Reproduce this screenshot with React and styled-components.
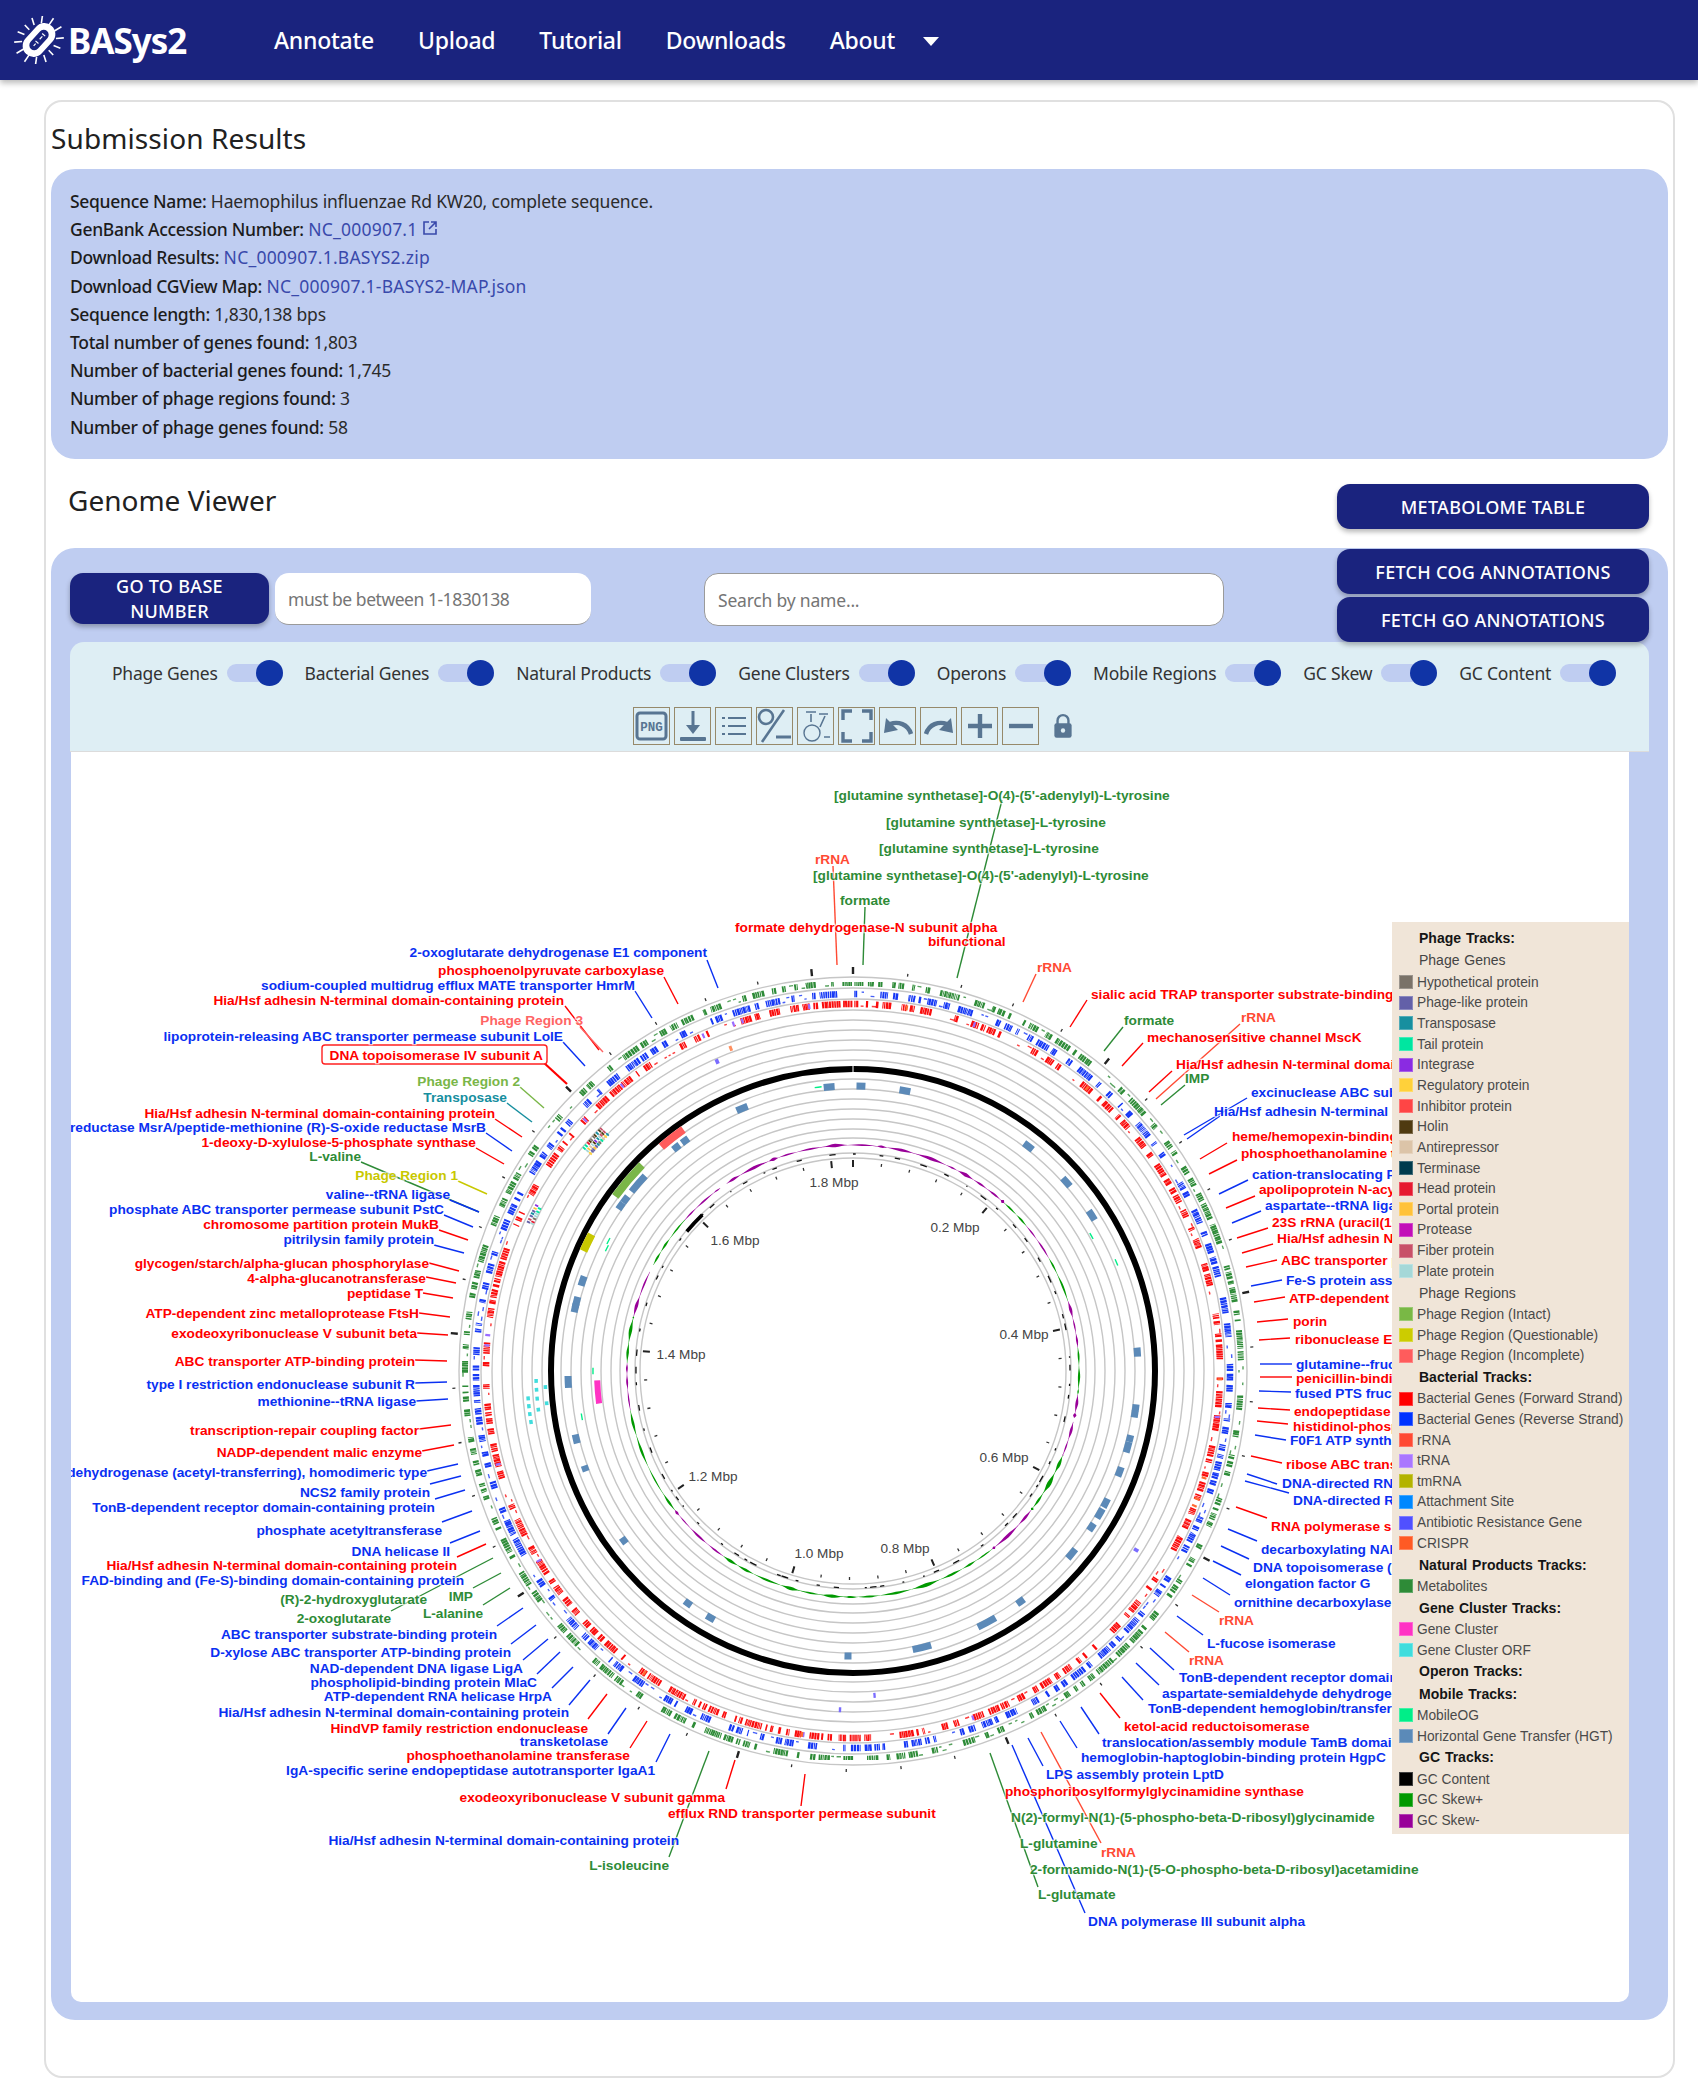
import React from 'react';
import styled, { createGlobalStyle } from 'styled-components';

const Global = createGlobalStyle`
  html, body { margin: 0; padding: 0; background: #fff; }
  body { font-family: "Noto Sans", "Liberation Sans", sans-serif; color: #212121; }
  * { box-sizing: border-box; }
`;

const NavBar = styled.header`
  height: 80px; background: #1a237e; display: flex; align-items: center;
  box-shadow: 0 3px 6px rgba(0,0,0,.28); position: relative;
`;
const LogoWrap = styled.div`
  width: 274px; display: flex; align-items: center; padding-left: 14px; flex: none;
`;
const LogoText = styled.span`
  color: #fff; font-size: 35px; font-weight: 700; margin-left: 4px; letter-spacing: -1px;
`;
const NavLink = styled.a`
  color: #fff; font-size: 23px; font-weight: 500; margin-right: ${p => p.$gap}px; white-space: nowrap; letter-spacing: -.25px;
`;
const Caret = styled.span`
  width: 0; height: 0; border-left: 8px solid transparent; border-right: 8px solid transparent;
  border-top: 9px solid #fff; margin-top: 2px;
`;
const Card = styled.main`
  margin: 20px 23px 0 44px; width: 1631px; height: 1978px; border: 2px solid #e0e0e0; border-radius: 18px;
  padding: 0 5px;
`;
const PageTitle = styled.h1`
  margin: 17px 0 12px; font-size: 28px; line-height: 38px; font-weight: 400; color: #212121; letter-spacing: .1px;
`;
const InfoPanel = styled.section`
  background: #bfcdf1; border-radius: 24px; padding: 18px 19px; height: 290px;
`;
const InfoLine = styled.div`
  font-size: 17.5px; letter-spacing: -.18px; line-height: 28.2px; color: #2b2b2b;
  white-space: nowrap;
`;
const InfoKey = styled.span`font-weight: 500; color: #1c1c1c; letter-spacing: -.3px;`;
const InfoLink = styled.a`color: #3949ab; letter-spacing: .22px;`;
const GenomeHead = styled.div`
  height: 89px; display: flex; justify-content: space-between; align-items: flex-start; padding: 25px 19px 0 17px;
`;
const GenomeTitle = styled.h2`
  margin: -1px 0 0; font-size: 28px; line-height: 34px; font-weight: 400; color: #212121;
`;
const NavyButton = styled.button`
  background: #1a237e; color: #fff; border: none; border-radius: 13px; font-family: inherit;
  font-size: 18px; font-weight: 500; letter-spacing: .3px; width: ${p => p.$w}px; height: ${p => p.$h}px;
  line-height: 25px; padding: 1px 10px 0; box-shadow: 0 3px 5px rgba(0,0,0,.28); text-transform: uppercase;
  margin-top: ${p => p.$mt || 0}px;
`;
const ViewerPanel = styled.section`
  background: #bfcdf1; border-radius: 24px; height: 1472px; padding: 1px 19px 0;
`;
const ControlsRow = styled.div`
  display: flex; align-items: flex-start; height: 93px;
`;
const PlainInput = styled.div`
  background: #fff; border-radius: 14px; height: ${p => p.$h}px; width: ${p => p.$w}px; margin: 24px 0 0 ${p => p.$ml}px;
  padding-left: 13px; display: flex; align-items: center; font-size: 17.5px; color: #757575;
  letter-spacing: ${p => p.$track}px;
  border: ${p => p.$outlined ? '1px solid #9a9a9a' : 'none'};
  border-bottom: 1px solid #9a9a9a;
`;
const FetchColumn = styled.div`
  margin-left: auto; display: flex; flex-direction: column; gap: 3px;
`;
const ControlPanel = styled.div`
  height: 110px; background: #deeef4; border-radius: 14px 14px 0 0; border-bottom: 1px solid #dcdcdc;
  display: flex; flex-direction: column;
`;
const ToggleRow = styled.div`
  display: flex; align-items: center; gap: 22px; padding: 0 0 0 42px; height: 62px; flex: none;
`;
const ToggleItem = styled.div`display: flex; align-items: center; gap: 9px;`;
const ToggleText = styled.span`font-size: 17.5px; letter-spacing: -.23px; color: #333; white-space: nowrap; line-height: 26px;`;
const ToggleTrack = styled.span`
  display: block; position: relative; width: 56px; height: 18px; border-radius: 9px; background: #bfcdf1;
`;
const ToggleThumb = styled.span`
  position: absolute; right: 0; top: -4px; width: 27px; height: 26px; border-radius: 50%; background: #1034a6;
`;
const Toolbar = styled.div`
  display: flex; align-items: center; gap: 4px; padding-left: 563px; margin-top: 3px;
`;
const ToolButton = styled.span`
  width: 37px; height: 38px; border: 1px solid #96896a; display: flex; align-items: center; justify-content: center; flex: none;
`;
const LockHolder = styled.span`
  margin-left: 8px; width: 24px; height: 38px; display: flex; align-items: center; justify-content: center;
`;
const MapCanvas = styled.div`
  position: relative; width: 1558px; height: 1250px; margin-left: 1px; background: #fff; overflow: hidden;
  border-radius: 0 0 10px 10px;
`;
const MapSvg = styled.svg`
  display: block; font-family: "Liberation Sans", Arial, sans-serif;
`;
const Legend = styled.aside`
  position: absolute; left: 1321px; top: 170px; width: 237px; height: 912px; background: #f0e5d8; padding: 5px 0 0 7px;
  font-family: "Liberation Sans", Arial, sans-serif;
`;
const LegendHead = styled.div`
  height: 22.4px; line-height: 22.4px; padding-left: 20px; font-size: 14px; white-space: nowrap;
  font-weight: ${p => p.$bold ? 700 : 400}; color: ${p => p.$bold ? '#151515' : '#444'}; word-spacing: 1px;
`;
const LegendRow = styled.div`
  height: 20.67px; display: flex; align-items: center; gap: 4px; font-size: 13.75px; color: #4a4a4a; white-space: nowrap;
`;
const Swatch = styled.span`
  width: 14px; height: 14px; flex: none; background: ${p => p.$c}; box-shadow: inset 0 0 0 1px rgba(255,255,255,.25);
`;

/* ---------- genome map data ---------- */
const CX = 853, CY = 1371;
const COL = { r: '#ff0000', b: '#0a30f2', g: '#2e8b37', o: '#ff4a33', p3: '#ff6464', p2: '#7ab648', p1: '#c8c800', t: '#178f9f', dg: '#1f7f45' };
const rng = seed => () => { seed = (seed * 1664525 + 1013904223) >>> 0; return seed / 4294967296; };
const pt = (r, a) => { const t = a * Math.PI / 180; return [CX + r * Math.sin(t), CY - r * Math.cos(t)]; };
const f = n => n.toFixed(1);
const arc = (r, a1, a2) => {
  const [x1, y1] = pt(r, a1), [x2, y2] = pt(r, a2);
  return `M${f(x1)} ${f(y1)}A${r} ${r} 0 ${a2 - a1 > 180 ? 1 : 0} 1 ${f(x2)} ${f(y2)}`;
};
const radial = (r1, r2, a) => {
  const [x1, y1] = pt(r1, a), [x2, y2] = pt(r2, a);
  return `M${f(x1)} ${f(y1)}L${f(x2)} ${f(y2)}`;
};
function geneTrack(seed, r) {
  const rand = rng(seed); let thick = '', thin = '', a = 0.2;
  while (a < 359) {
    if (rand() < 0.68) {
      const end = a + 0.25 + rand() * rand() * 3;
      while (a < end) {
        const l = 0.1 + rand() * 0.3;
        thick += arc(r, a, a + l);
        a += l + 0.03 + rand() * 0.09;
      }
    } else {
      thin += arc(r + (rand() < .5 ? 2 : -2), a, a + 0.35 + rand() * .35);
      a += 0.3;
    }
    const g = rand();
    a += g < 0.5 ? 0.25 + rand() * 0.4 : g < 0.9 ? 0.6 + rand() * 1 : 1.5 + rand() * 2;
  }
  return { thick, thin };
}
const TRACKS = [
  { c: '#2e8b37', ...geneTrack(17, 388), w: 6 },
  { c: '#1638f5', ...geneTrack(91, 377), w: 6.5 },
  { c: '#fa0a0a', ...geneTrack(233, 367), w: 6.5 },
];
const RINGS = [394, 383, 372, 361, 351, 341, 331, 321, 311, 292, 282, 272, 262, 252, 242, 233, 218, 213];

const ticks = (() => {
  let minorO = '', minorI = '', majorO = '', majorI = '';
  for (let bp = 0; bp < 1830138; bp += 40000) {
    const a = bp / 1830138 * 360;
    if (bp % 200000 === 0) { majorO += radial(397, 404, a); majorI += radial(204, 211, a); }
    else { minorO += radial(398, 401, a); minorI += radial(206, 209, a); }
  }
  return { minorO, minorI, majorO, majorI };
})();

const SKEW = [
  [-62, -48, '#009900', 2], [-48, -36, '#990099', 3], [-34, 42, '#990099', 3.4], [42, 50, '#009900', 1.6], [50, 60, '#990099', 2.4],
  [60, 72, '#009900', 2], [72, 84, '#990099', 2.8], [84, 96, '#009900', 3], [96, 102, '#990099', 3.4], [103, 112, '#990099', 2.4],
  [112, 128, '#009900', 5.5], [128, 142, '#990099', 3], [142, 215, '#009900', 3.4], [215, 232, '#990099', 2.4], [232, 260, '#009900', 2.6], [260, 272, '#990099', 2.6], [272, 284, '#009900', 3.4], [284, 296, '#990099', 3.2],
];
const skewPaths = [];
SKEW.forEach(([a1, a2, c, amp], i) => {
  const rand = rng(i * 37 + 5);
  let a = a1;
  while (a < a2) {
    const w = Math.min(2.5 + rand() * 6, a2 - a), peak = amp * (.35 + .65 * rand());
    let out = '', inn = '';
    for (let t = 0; t <= 8; t++) {
      const b = a + w * t / 8, s = Math.sin(t / 8 * Math.PI), k = .35 + peak * s * s;
      const [x, y] = pt(226 + k * .55, b); out += `${out ? 'L' : 'M'}${f(x)} ${f(y)}`;
      const [u, v] = pt(226 - k * .45, b); inn = `L${f(u)} ${f(v)}` + inn;
    }
    skewPaths.push({ c, d: out + inn + 'Z' });
    a += w;
  }
});
const gcContent = (() => {
  const rand = rng(71); let thin = '';
  for (let a = 0; a < 359; a += 2 + rand() * 7) thin += arc(217, a, a + 0.3 + rand() * 1.6);
  return thin;
})();

const HGT = [[-4.8,2.2],[1.6,1.8],[10.5,2.2],[-22.9,2.4],[-48.9,4.2],[-38.3,1.6],[-36.1,1.6],[-53,1.6],[-54.6,1.6],[-71.6,2],[-76,2.2],[-77.2,1.8],[-92.2,2.4],[-103.8,1.8],[38,2.2],[48.5,2.2],[56.9,2.2],[86.2,1.8],[97.4,1.4],[98.7,1.4],[103.7,1.4],[105.5,2.2],[110.7,2],[117.6,1.9],[120,2.2],[123.2,1.7],[129.9,2.4],[144,1.7],[152,4],[166,3.8],[181,1.4],[-150,1.8],[-144.6,1.6],[-126.5,1.4],[-110,1.2]];
const REGIONS = [[-37.8, 5.4, '#ff5c5c'], [-49.7, 8, '#7ab648'], [-64.2, 3.6, '#c8c800']];
const MOBILE = [[286, -7], [277, -62], [275, -63.5], [275, -99.6], [274, 60.5], [285, 67.6], [260, -90]];
const CYAN = [[326,-99],[326,-97.6],[326,-96.2],[326,-94.8],[317,-97],[317,-95],[317,-93.4],[317,-91.8],[308,-96],[308,-93]];
const PHAGE_C = ['#7a7268','#6360a8','#178f9f','#00e6a0','#8a2be2','#ffd13a','#ff4545','#4f3a10','#dcc4a8','#003b4d','#e6192f','#ffc23a','#c20db8','#c85068','#a5d8d8'];
const phageBits = (() => {
  const rand = rng(5); const out = [];
  for (const [a0, span, rs] of [[-50.5, 4.4, [349, 345, 341]], [-65.5, 3, [357, 353]]]) {
    for (const r of rs) for (let a = a0; a < a0 + span; a += .3 + rand() * .3)
      out.push({ d: arc(r, a, a + .3), c: PHAGE_C[Math.floor(rand() * PHAGE_C.length)] });
  }
  return out;
})();
const TRNA = (() => {
  const rand = rng(44), out = [];
  for (let i = 0; i < 22; i++) {
    const a = rand() * 360;
    out.push({ d: arc(367, a, a + .35), c: i % 3 === 0 ? '#ff6a33' : '#9a6cff' });
  }
  out.push({ d: arc(335, 122, 122.6), c: '#7a6cff' }, { d: arc(338, -24, -23.4), c: '#7a6cff' }, { d: arc(345, -21, -20.5), c: '#ff9060' }, { d: arc(325, 176, 176.4), c: '#7a6cff' }, { d: arc(339, 182, 182.4), c: '#7a6cff' });
  return out;
})();
const SCALE = [['1.8 Mbp', 834, 1187], ['0.2 Mbp', 955, 1232], ['0.4 Mbp', 1024, 1339], ['0.6 Mbp', 1004, 1462], ['0.8 Mbp', 905, 1553], ['1.0 Mbp', 819, 1558], ['1.2 Mbp', 713, 1481], ['1.4 Mbp', 681, 1359], ['1.6 Mbp', 735, 1245]];

const H = 'Hia/Hsf adhesin N-terminal domain-containing protein';
const GS1 = '[glutamine synthetase]-O(4)-(5\'-adenylyl)-L-tyrosine';
const GS2 = '[glutamine synthetase]-L-tyrosine';
const LABELS = [
  ['2-oxoglutarate dehydrogenase E1 component','e',707,957,'b',707,960,718,988],
  ['phosphoenolpyruvate carboxylase','e',664,975,'r',664,977,678,1004],
  ['sodium-coupled multidrug efflux MATE transporter HmrM','e',635,990,'b',635,991,652,1018],
  [H,'e',564,1005,'r',565,1006,599,1050],
  ['Phage Region 3','e',583,1025,'p3',580,1027,603,1052],
  ['lipoprotein-releasing ABC transporter permease subunit LolE','e',563,1041,'b',563,1042,585,1066],
  ['DNA topoisomerase IV subunit A','e',543,1060,'r',543,1062,567,1084,2.2],
  ['Phage Region 2','e',520,1086,'p2',520,1087,544,1108],
  ['Transposase','e',507,1102,'t',507,1103,532,1122],
  [H,'e',495,1118,'r',495,1119,522,1137],
  ['peptide-methionine (S)-S-oxide reductase MsrA/peptide-methionine (R)-S-oxide reductase MsrB','e',486,1132,'b',486,1133,512,1151],
  ['1-deoxy-D-xylulose-5-phosphate synthase','e',476,1147,'r',476,1148,504,1164],
  ['L-valine','e',361,1161,'g',361,1162,479,1212],
  ['Phage Region 1','e',458,1180,'p1',458,1181,487,1194],
  ['valine--tRNA ligase','e',450,1199,'b',450,1200,479,1212],
  ['phosphate ABC transporter permease subunit PstC','e',444,1214,'b',444,1215,473,1227],
  ['chromosome partition protein MukB','e',439,1229,'r',439,1230,468,1240],
  ['pitrilysin family protein','e',434,1244,'b',434,1245,464,1253],
  ['glycogen/starch/alpha-glucan phosphorylase','e',429,1268,'r',429,1263,459,1271],
  ['4-alpha-glucanotransferase','e',426,1283,'r',426,1277,456,1283],
  ['peptidase T','e',423,1298,'r',423,1293,453,1298],
  ['ATP-dependent zinc metalloprotease FtsH','e',419,1318,'r',419,1313,450,1317],
  ['exodeoxyribonuclease V subunit beta','e',417,1338,'r',417,1333,448,1335],
  ['ABC transporter ATP-binding protein','e',415,1366,'r',415,1360,447,1361],
  ['type I restriction endonuclease subunit R','e',415,1389,'b',415,1383,447,1382],
  ['methionine--tRNA ligase','e',416,1406,'b',416,1401,448,1399],
  ['transcription-repair coupling factor','e',419,1435,'r',419,1429,451,1425],
  ['NADP-dependent malic enzyme','e',422,1457,'r',422,1451,454,1445],
  ['pyruvate dehydrogenase (acetyl-transferring), homodimeric type','e',427,1477,'b',427,1471,458,1464],
  ['NCS2 family protein','e',430,1497,'b',430,1484,461,1476],
  ['TonB-dependent receptor domain-containing protein','e',435,1512,'b',435,1499,465,1490],
  ['phosphate acetyltransferase','e',442,1535,'b',442,1522,472,1511],
  ['DNA helicase II','e',450,1556,'b',450,1543,480,1531],
  [H,'e',457,1570,'r',457,1557,486,1544],
  ['FAD-binding and (Fe-S)-binding domain-containing protein','e',464,1585,'b'],
  ['(R)-2-hydroxyglutarate','e',427,1604,'g'],
  ['IMP','e',473,1601,'g',473,1588,501,1573],
  ['L-alanine','e',483,1618,'g',483,1605,510,1588],
  ['2-oxoglutarate','e',391,1623,'g',391,1611,493,1558],
  ['ABC transporter substrate-binding protein','e',497,1639,'b',497,1626,523,1608],
  ['D-xylose ABC transporter ATP-binding protein','e',511,1657,'b',511,1644,536,1625],
  ['NAD-dependent DNA ligase LigA','e',523,1673,'b',523,1660,548,1639],
  ['phospholipid-binding protein MlaC','e',537,1687,'b',537,1674,560,1652],
  ['ATP-dependent RNA helicase HrpA','e',552,1701,'b',552,1688,573,1667],
  [H,'e',569,1717,'b',569,1705,590,1680],
  ['HindVP family restriction endonuclease','e',588,1733,'r',588,1719,607,1694],
  ['transketolase','e',608,1746,'b',608,1734,626,1708],
  ['phosphoethanolamine transferase','e',630,1760,'r',630,1748,647,1721],
  ['IgA-specific serine endopeptidase autotransporter IgaA1','e',655,1775,'b',656,1762,670,1734],
  ['exodeoxyribonuclease V subunit gamma','e',725,1802,'r',726,1789,735,1760],
  ['efflux RND transporter permease subunit','s',668,1818,'r',801,1806,805,1774],
  [H,'e',679,1845,'b'],
  ['L-isoleucine','e',669,1870,'g',669,1857,709,1751],
  ['phosphoribosylformylglycinamidine synthase','s',1005,1796,'r'],
  ['N(2)-formyl-N(1)-(5-phospho-beta-D-ribosyl)glycinamide','s',1011,1822,'g'],
  ['L-glutamine','s',1020,1848,'g'],
  ['rRNA','s',1101,1857,'o',1101,1843,1041,1732],
  ['2-formamido-N(1)-(5-O-phospho-beta-D-ribosyl)acetamidine','s',1030,1874,'g'],
  ['L-glutamate','s',1038,1899,'g',1038,1887,990,1753],
  ['DNA polymerase III subunit alpha','s',1088,1926,'b',1085,1913,1012,1745],
  ['LPS assembly protein LptD','s',1046,1779,'b',1043,1766,1028,1738],
  ['hemoglobin-haptoglobin-binding protein HgpC','s',1081,1762,'b',1077,1748,1060,1721],
  ['translocation/assembly module TamB domain-containing protein','s',1102,1747,'b',1099,1734,1081,1707],
  ['ketol-acid reductoisomerase','s',1124,1731,'r',1120,1718,1100,1693],
  ['TonB-dependent hemoglobin/transferrin/lactoferrin family receptor','s',1148,1713,'b',1143,1700,1122,1677],
  ['aspartate-semialdehyde dehydrogenase','s',1162,1698,'b',1159,1685,1136,1663],
  ['TonB-dependent receptor domain-containing protein','s',1179,1682,'b',1174,1670,1150,1648],
  ['rRNA','s',1189,1665,'o',1189,1652,1165,1632],
  ['L-fucose isomerase','s',1207,1648,'b',1203,1635,1177,1616],
  ['rRNA','s',1219,1625,'o',1219,1612,1192,1595],
  ['ornithine decarboxylase','s',1234,1607,'b',1230,1595,1203,1578],
  ['elongation factor G','s',1245,1588,'b',1241,1575,1213,1561],
  ['DNA topoisomerase (ATP-hydrolyzing) subunit A','s',1253,1572,'b',1249,1559,1221,1546],
  ['decarboxylating NADP(+)-dependent phosphogluconate dehydrogenase','s',1261,1554,'b',1257,1541,1228,1529],
  ['RNA polymerase sigma factor','s',1271,1531,'r',1267,1518,1236,1507],
  ['DNA-directed RNA polymerase subunit beta','s',1293,1505,'b',1289,1493,1245,1481],
  ['DNA-directed RNA polymerase subunit alpha','s',1282,1488,'b',1277,1484,1247,1474],
  ['ribose ABC transporter permease','s',1286,1469,'r',1282,1463,1251,1456],
  ['F0F1 ATP synthase subunit beta','s',1290,1445,'b',1286,1440,1255,1435],
  ['histidinol-phosphatase','s',1293,1431,'r',1288,1424,1257,1421],
  ['endopeptidase La','s',1294,1416,'r',1290,1410,1258,1408],
  ['fused PTS fructose transporter','s',1295,1398,'b',1291,1392,1259,1391],
  ['penicillin-binding protein','s',1296,1383,'r',1292,1377,1260,1377],
  ['glutamine--fructose-6-phosphate','s',1296,1369,'b',1292,1364,1260,1364],
  ['ribonuclease E','s',1295,1344,'r',1290,1338,1259,1340],
  ['porin','s',1293,1326,'r',1288,1319,1257,1322],
  ['ATP-dependent helicase','s',1289,1303,'r',1285,1297,1254,1302],
  ['Fe-S protein assembly co-chaperone','s',1286,1285,'b',1282,1280,1251,1286],
  ['ABC transporter permease','s',1281,1265,'r',1277,1260,1246,1267],
  ['Hia/Hsf adhesin N-terminal domain','s',1277,1243,'r',1273,1244,1242,1253],
  ['23S rRNA (uracil(1939)-C(5))-methyltransferase','s',1272,1227,'r',1268,1228,1237,1238],
  ['aspartate--tRNA ligase','s',1265,1210,'b',1261,1211,1232,1223],
  ['apolipoprotein N-acyltransferase','s',1259,1194,'r',1255,1196,1226,1208],
  ['cation-translocating P-type ATPase','s',1252,1179,'b',1248,1180,1219,1194],
  ['phosphoethanolamine transferase','s',1241,1158,'r',1237,1160,1209,1174],
  ['heme/hemopexin-binding protein','s',1232,1141,'r',1227,1143,1200,1159],
  [H,'s',1214,1116,'b',1220,1116,1187,1139],
  ['excinuclease ABC subunit UvrA','s',1251,1097,'b',1247,1098,1184,1135],
  ['IMP','s',1185,1083,'g',1185,1085,1161,1105],
  [H,'s',1176,1069,'r',1172,1071,1149,1092],
  ['rRNA','s',1241,1022,'o',1240,1024,1156,1099],
  ['mechanosensitive channel MscK','s',1147,1042,'r',1143,1043,1122,1066],
  ['formate','s',1124,1025,'g',1123,1027,1104,1051],
  ['sialic acid TRAP transporter substrate-binding protein','s',1091,999,'r',1087,1000,1070,1027],
  ['rRNA','s',1037,972,'o',1036,974,1023,1002],
  [GS1,'s',834,800,'g',1002,800,957,978],
  [GS2,'s',886,827,'g'],
  [GS2,'s',879,853,'g'],
  [GS1,'s',813,880,'g'],
  ['rRNA','s',815,864,'o',833,866,837,965],
  ['formate','s',840,905,'g',865,907,863,965],
  ['formate dehydrogenase-N subunit alpha','s',735,932,'r'],
  ['bifunctional','s',928,946,'r'],
];

const LEGEND = [
  ['h', 'Phage Tracks:', 'b'], ['h', 'Phage Genes'],
  ['Hypothetical protein','#7a7268'],['Phage-like protein','#6360a8'],['Transposase','#178f9f'],['Tail protein','#00e6a0'],['Integrase','#8a2be2'],
  ['Regulatory protein','#ffd13a'],['Inhibitor protein','#ff4545'],['Holin','#4f3a10'],['Antirepressor','#dcc4a8'],['Terminase','#003b4d'],
  ['Head protein','#e6192f'],['Portal protein','#ffc23a'],['Protease','#c20db8'],['Fiber protein','#c85068'],['Plate protein','#a5d8d8'],
  ['h', 'Phage Regions'],
  ['Phage Region (Intact)','#79b845'],['Phage Region (Questionable)','#cccc00'],['Phage Region (Incomplete)','#ff5c5c'],
  ['h', 'Bacterial Tracks:', 'b'],
  ['Bacterial Genes (Forward Strand)','#ff0000'],['Bacterial Genes (Reverse Strand)','#0033ff'],['rRNA','#ff4a33'],['tRNA','#aa77ff'],['tmRNA','#b3b300'],
  ['Attachment Site','#0088ff'],['Antibiotic Resistance Gene','#5050ff'],['CRISPR','#ff5a24'],
  ['h', 'Natural Products Tracks:', 'b'], ['Metabolites','#2e8b37'],
  ['h', 'Gene Cluster Tracks:', 'b'], ['Gene Cluster','#ff33c4'],['Gene Cluster ORF','#40dddd'],
  ['h', 'Operon Tracks:', 'b'], ['h', 'Mobile Tracks:', 'b'],
  ['MobileOG','#00ee88'],['Horizontal Gene Transfer (HGT)','#5b8ab8'],
  ['h', 'GC Tracks:', 'b'], ['GC Content','#000000'],['GC Skew+','#009900'],['GC Skew-','#990099'],
];
const TOGGLES = ['Phage Genes','Bacterial Genes','Natural Products','Gene Clusters','Operons','Mobile Regions','GC Skew','GC Content'];
const ICON = '#587592';

const Logo = () => {
  const spikes = [];
  for (let i = 0; i < 14; i++) {
    const a = i / 14 * 360 + 8, t = a * Math.PI / 180;
    const k = 1 + .28 * Math.abs(Math.sin(t + Math.PI / 4));
    const x1 = 25 + 14 * k * Math.sin(t), y1 = 24 - 14 * k * Math.cos(t), x2 = 25 + 20.5 * k * Math.sin(t), y2 = 24 - 20.5 * k * Math.cos(t);
    spikes.push(<line key={i} x1={x1} y1={y1} x2={x2} y2={y2} stroke="#fff" strokeWidth="1.6" />);
  }
  return (
    <svg width="50" height="48" viewBox="0 0 50 48">
      {spikes}
      <g transform="rotate(-48 25 24)">
        <rect x="6" y="13" width="38" height="22" rx="11" fill="#fff" />
        <rect x="13" y="19" width="24" height="10" rx="5" fill="#1a237e" />
        <path d="M17 24h3M22 22v4M26 24h4M32 22v4" stroke="#fff" strokeWidth="1.2" />
      </g>
    </svg>
  );
};

const ToolIcon = ({ kind }) => {
  const s = { stroke: ICON, fill: 'none' };
  switch (kind) {
    case 'png': return (
      <svg width="33" height="30" viewBox="0 0 33 30">
        <rect x="2" y="2" width="29" height="26" rx="3" fill="none" stroke={ICON} strokeWidth="3" />
        <text x="16.5" y="20" textAnchor="middle" fontFamily="'Liberation Mono', monospace" fontWeight="700" fontSize="12.5" fill={ICON}>PNG</text>
      </svg>);
    case 'down': return (
      <svg width="30" height="32" viewBox="0 0 30 32">
        <path d="M15 1v20" {...s} strokeWidth="3" /><path d="M8 15l7 9 7-9z" fill={ICON} />
        <rect x="2" y="27" width="26" height="4" rx="1" fill={ICON} />
      </svg>);
    case 'list': return (
      <svg width="26" height="22" viewBox="0 0 26 22">
        <path d="M7 3h18M7 11h18M7 19h18" {...s} strokeWidth="2.2" />
        <path d="M1 3h3M1 11h3M1 19h3" {...s} strokeWidth="2.2" />
      </svg>);
    case 'pct': return (
      <svg width="35" height="36" viewBox="0 0 35 36">
        <circle cx="9" cy="9" r="7" {...s} strokeWidth="2.6" />
        <path d="M27 2L5 34" {...s} strokeWidth="2.6" /><path d="M19 29h15" {...s} strokeWidth="3" />
      </svg>);
    case 'gc': return (
      <svg width="30" height="34" viewBox="0 0 30 34">
        <circle cx="11" cy="24" r="8" {...s} strokeWidth="1.4" />
        <path d="M5 3h10M10 5v8M18 5h9M24 7l-5 11M23 28h6" {...s} strokeWidth="1.6" />
      </svg>);
    case 'full': return (
      <svg width="32" height="34" viewBox="0 0 32 34">
        <path d="M2 11V2h9M21 2h9v9M2 23v9h9M30 23v9h-9" {...s} strokeWidth="3.4" />
      </svg>);
    case 'undo': return (
      <svg width="32" height="22" viewBox="0 0 32 22">
        <path d="M29 19C26 9 16 6 8 9" {...s} strokeWidth="4.4" />
        <path d="M4 3L2 18L16 15Z" fill={ICON} />
      </svg>);
    case 'redo': return (
      <svg width="32" height="22" viewBox="0 0 32 22">
        <path d="M3 19C6 9 16 6 24 9" {...s} strokeWidth="4.4" />
        <path d="M28 3L30 18L16 15Z" fill={ICON} />
      </svg>);
    case 'plus': return (
      <svg width="26" height="26" viewBox="0 0 26 26"><path d="M13 1v24M1 13h24" {...s} strokeWidth="4.4" /></svg>);
    case 'minus': return (
      <svg width="26" height="8" viewBox="0 0 26 8"><path d="M1 4h24" {...s} strokeWidth="4.4" /></svg>);
    default: return null;
  }
};
const TOOLS = ['png','down','list','pct','gc','full','undo','redo','plus','minus'];

const GenomeMap = () => (
  <MapSvg width="1558" height="1250" viewBox="71 752 1558 1250">
    <defs>
      <filter id="soft" x="0" y="0" width="100%" height="100%"><feGaussianBlur stdDeviation=".4" /></filter>
    </defs>
    <g fill="none">
      {RINGS.map(r => <circle key={r} cx={CX} cy={CY} r={r} stroke="#c6c6c6" strokeWidth="1.4" />)}
      <circle cx={CX} cy={CY} r="302" stroke="#000" strokeWidth="6" />
      <path d={radial(299, 305, 0)} stroke="#fff" strokeWidth="1" />
      {LABELS.filter(l => l.length > 5).map((l, i) => (
        <line key={i} x1={l[5]} y1={l[6]} x2={l[7]} y2={l[8]} stroke={COL[l[4]]} strokeWidth={l[9] || 1.4} />
      ))}
      <g filter="url(#soft)">
        {TRACKS.map(t => (
          <g key={t.c} stroke={t.c}>
            <path d={t.thick} strokeWidth={t.w} />
            <path d={t.thin} strokeWidth="1.4" opacity=".8" />
          </g>
        ))}
        {TRNA.map((b, i) => <path key={i} d={b.d} stroke={b.c} strokeWidth="5" />)}
        {phageBits.map((b, i) => <path key={i} d={b.d} stroke={b.c} strokeWidth="3.5" />)}
        {HGT.map(([a, l], i) => <path key={i} d={arc(285, a - l / 2, a + l / 2)} stroke="#5b8ab8" strokeWidth="7" />)}
      </g>
      {REGIONS.map(([a, l, c]) => <path key={c} d={arc(295, a - l / 2, a + l / 2)} stroke={c} strokeWidth="8" />)}
      {MOBILE.map(([r, a], i) => <path key={i} d={arc(r, a - .7, a + .7)} stroke="#00ee88" strokeWidth="1.4" />)}
      <path d={arc(256, -97.3, -92.1)} stroke="#ff33c4" strokeWidth="6" />
      {CYAN.map(([r, a], i) => <path key={i} d={arc(r, a - .35, a + .35)} stroke="#40dddd" strokeWidth="3.5" />)}
      <path d={gcContent} stroke="#111" strokeWidth="1.3" />
      <path d={arc(217, -50, -44)} stroke="#000" strokeWidth="3.6" />
      <path d={ticks.minorO} stroke="#333" strokeWidth="1.3" />
      <path d={ticks.minorI} stroke="#333" strokeWidth="1.3" />
      <path d={ticks.majorO} stroke="#222" strokeWidth="2.4" />
      <path d={ticks.majorI} stroke="#222" strokeWidth="2" />
    </g>
    {skewPaths.map((p, i) => <path key={i} d={p.d} fill={p.c} />)}
    {SCALE.map(([t, x, y]) => <text key={t} x={x} y={y} textAnchor="middle" fontSize="13.6" fill="#444">{t}</text>)}
    <rect x="322" y="1045" width="225" height="19" rx="3" fill="#fff" stroke="#ff2020" strokeWidth="1.4" />
    {LABELS.map((l, i) => (
      <text key={i} x={l[2]} y={l[3]} textAnchor={l[1] === 'e' ? 'end' : 'start'} fontSize="13.7" fontWeight="700" fill={COL[l[4]]}
        stroke="rgba(255,255,255,.65)" strokeWidth="2.5" paintOrder="stroke">{l[0]}</text>
    ))}
  </MapSvg>
);

export default function App() {
  return (
    <>
      <Global />
      <NavBar>
        <LogoWrap><Logo /><LogoText>BASys2</LogoText></LogoWrap>
        <NavLink $gap={44}>Annotate</NavLink>
        <NavLink $gap={44}>Upload</NavLink>
        <NavLink $gap={44}>Tutorial</NavLink>
        <NavLink $gap={44}>Downloads</NavLink>
        <NavLink $gap={28}>About</NavLink>
        <Caret />
      </NavBar>
      <Card>
        <PageTitle>Submission Results</PageTitle>
        <InfoPanel>
          <InfoLine><InfoKey>Sequence Name:</InfoKey> Haemophilus influenzae Rd KW20, complete sequence.</InfoLine>
          <InfoLine>
            <InfoKey>GenBank Accession Number:</InfoKey> <InfoLink>NC_000907.1</InfoLink>{' '}
            <svg width="16" height="16" viewBox="0 0 16 16" fill="none" stroke="#3949ab" strokeWidth="1.6"><path d="M7 2H2v12h12V9M9 2h5v5M14 2L7 9" /></svg>
          </InfoLine>
          <InfoLine><InfoKey>Download Results:</InfoKey> <InfoLink>NC_000907.1.BASYS2.zip</InfoLink></InfoLine>
          <InfoLine><InfoKey>Download CGView Map:</InfoKey> <InfoLink>NC_000907.1-BASYS2-MAP.json</InfoLink></InfoLine>
          <InfoLine><InfoKey>Sequence length:</InfoKey> 1,830,138 bps</InfoLine>
          <InfoLine><InfoKey>Total number of genes found:</InfoKey> 1,803</InfoLine>
          <InfoLine><InfoKey>Number of bacterial genes found:</InfoKey> 1,745</InfoLine>
          <InfoLine><InfoKey>Number of phage regions found:</InfoKey> 3</InfoLine>
          <InfoLine><InfoKey>Number of phage genes found:</InfoKey> 58</InfoLine>
        </InfoPanel>
        <GenomeHead>
          <GenomeTitle>Genome Viewer</GenomeTitle>
          <NavyButton $w={312} $h={45}>Metabolome Table</NavyButton>
        </GenomeHead>
        <ViewerPanel>
          <ControlsRow>
            <NavyButton $w={199} $h={51} $mt={24}>Go to base number</NavyButton>
            <PlainInput $w={316} $h={52} $ml={6} $track={-.47}>must be between 1-1830138</PlainInput>
            <PlainInput $w={520} $h={53} $ml={113} $track={-.2} $outlined>Search by name...</PlainInput>
            <FetchColumn>
              <NavyButton $w={312} $h={45}>Fetch COG Annotations</NavyButton>
              <NavyButton $w={312} $h={45}>Fetch GO Annotations</NavyButton>
            </FetchColumn>
          </ControlsRow>
          <ControlPanel>
            <ToggleRow>
              {TOGGLES.map(t => (
                <ToggleItem key={t}>
                  <ToggleText>{t}</ToggleText>
                  <ToggleTrack><ToggleThumb /></ToggleTrack>
                </ToggleItem>
              ))}
            </ToggleRow>
            <Toolbar>
              {TOOLS.map(k => <ToolButton key={k}><ToolIcon kind={k} /></ToolButton>)}
              <LockHolder>
                <svg width="20" height="26" viewBox="0 0 22 28">
                  <path d="M5 12V8a6 6 0 0112 0v4" fill="none" stroke={ICON} strokeWidth="2.6" />
                  <rect x="1.5" y="11" width="19" height="16" rx="2.5" fill={ICON} />
                  <circle cx="11" cy="19" r="2.4" fill="#deeef4" />
                </svg>
              </LockHolder>
            </Toolbar>
          </ControlPanel>
          <MapCanvas>
            <GenomeMap />
            <Legend>
              {LEGEND.map(item => item[0] === 'h'
                ? <LegendHead key={item[1]} $bold={item[2] === 'b'}>{item[1]}</LegendHead>
                : <LegendRow key={item[0]}><Swatch $c={item[1]} />{item[0]}</LegendRow>)}
            </Legend>
          </MapCanvas>
        </ViewerPanel>
      </Card>
    </>
  );
}
